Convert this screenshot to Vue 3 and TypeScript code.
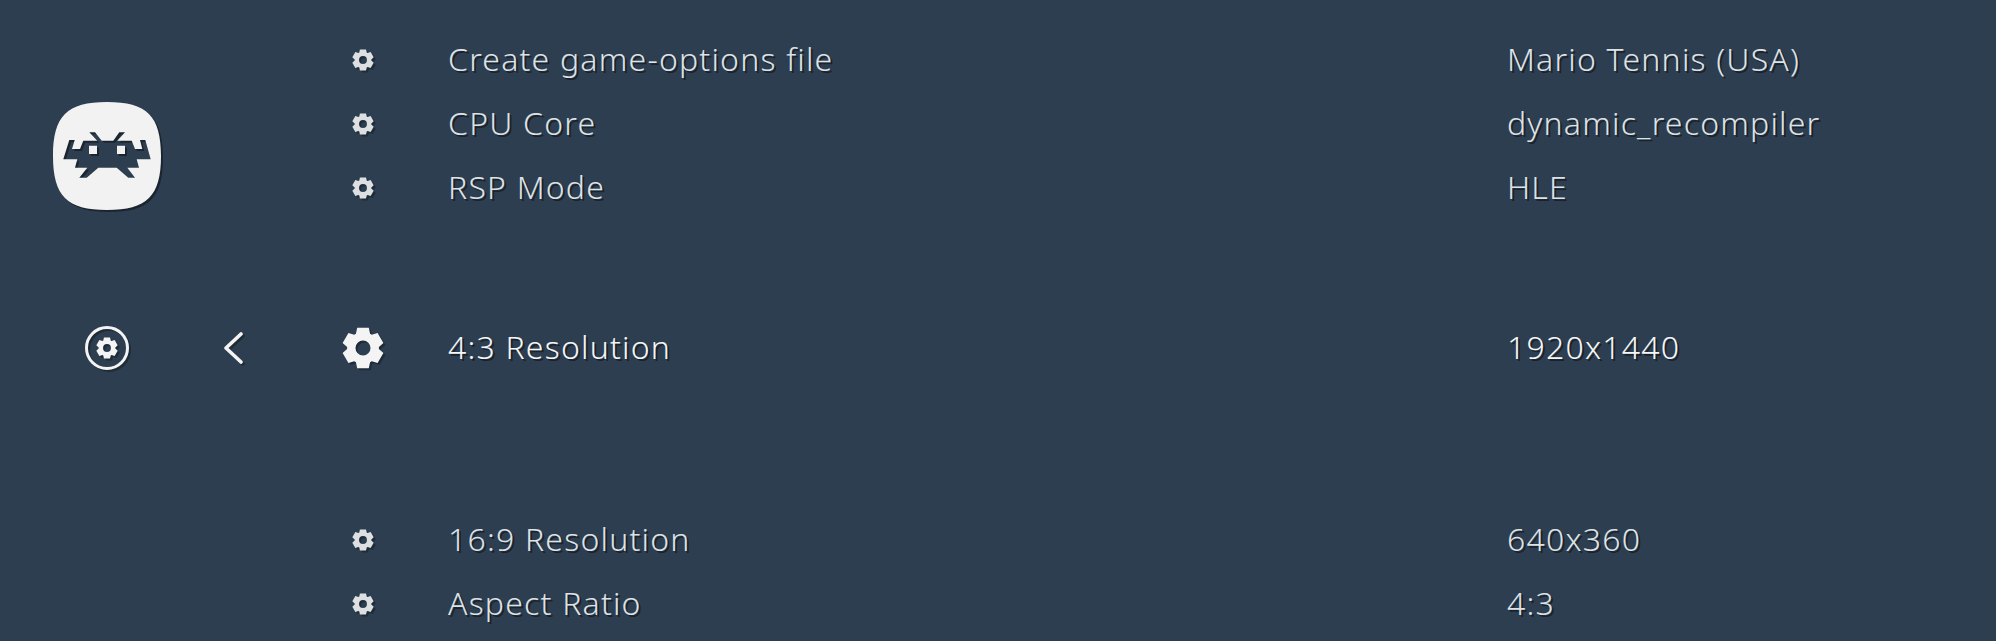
<script setup lang="ts">
type Row = { label: string; value: string; active?: boolean }

const rows: Row[] = [
  { label: 'Create game-options file', value: 'Mario Tennis (USA)' },
  { label: 'CPU Core', value: 'dynamic_recompiler' },
  { label: 'RSP Mode', value: 'HLE' },
  { label: '4:3 Resolution', value: '1920x1440', active: true },
  { label: '16:9 Resolution', value: '640x360' },
  { label: 'Aspect Ratio', value: '4:3' }
]

// six-tooth gear in a 24x24 box, teeth pointing up and down
function gearPath(hole: number): string {
  const pts: string[] = []
  for (let i = 0; i < 6; i++) {
    const a = (i * Math.PI) / 3 - Math.PI / 2
    const at = (r: number, d: number) =>
      `${(12 + r * Math.cos(a + d)).toFixed(2)} ${(12 + r * Math.sin(a + d)).toFixed(2)}`
    pts.push(at(9.1, -0.46), at(12, -0.28), at(12, 0.28), at(9.1, 0.46))
  }
  const ring = `M${pts.join('L')}Z`
  return `${ring}M${12 - hole} 12a${hole} ${hole} 0 1 0 ${hole * 2} 0a${hole} ${hole} 0 1 0 ${-hole * 2} 0Z`
}

const gear = gearPath(4.3)

// rounded tile with the invader cut out, so the tile's shadow falls inside the hole
const tile = 'M54 0C94 0 108 14 108 54S94 108 54 108 0 94 0 54 14 0 54 0Z'
const invader =
  'M36.3 30.3H42L48.7 38.7H60.3L66.3 30.3H72L64.3 38.7H78.7L82 47H89.3L87 38H92.3L97.7 57.3H83.7L86 65.7H74.3L82 75.7H75.3L63.7 65.7H45.3L33.7 75.7H26.3L34.3 65.7H22L24.3 57.3H10.3L16.3 38H21.7L19 47H27L30.3 38.7H44.3Z'
const eyes = 'M36 43.7h8v8.3h-8ZM64 43.7h8v8.3h-8Z'
</script>

<template>
  <div class="screen">
    <aside class="side">
      <div class="logo">
        <svg viewBox="0 0 108 108" width="108" height="108">
          <path class="squircle" fill-rule="evenodd" :d="`${tile}${invader}`" />
          <path class="squircle" :d="eyes" />
        </svg>
      </div>
      <div class="tab">
        <svg class="tab-icon" viewBox="0 0 44 44" width="44" height="44">
          <circle cx="22" cy="22" r="20.5" fill="none" stroke="#f4f4f4" stroke-width="3" />
          <g transform="translate(11 11) scale(0.9167)"><path :d="gear" fill="#f4f4f4" fill-rule="evenodd" /></g>
        </svg>
        <svg class="chevron" viewBox="0 0 20 32" width="20" height="32">
          <path d="M18 2 3 16l15 14" fill="none" stroke="#f4f4f4" stroke-width="3.6" stroke-linecap="round" stroke-linejoin="round" />
        </svg>
      </div>
    </aside>
    <main class="list">
      <div v-for="row in rows" :key="row.label" class="row" :class="{ active: row.active }">
        <span class="icon">
          <svg viewBox="0 0 24 24"><path :d="gear" fill-rule="evenodd" /></svg>
        </span>
        <span class="label">{{ row.label }}</span>
        <span class="value">{{ row.value }}</span>
      </div>
    </main>
  </div>
</template>

<style scoped>
.screen {
  display: flex;
  width: 1996px;
  height: 641px;
  overflow: hidden;
  background: #2d3e50;
  font-family: "Noto Sans", sans-serif;
  font-weight: 300;
}
.side {
  width: 321px;
  flex: none;
  padding: 102px 0 0 53px;
  box-sizing: border-box;
}
.logo {
  width: 108px;
  height: 108px;
  filter: drop-shadow(2px 2px 0 rgba(0, 0, 0, 0.4));
}
.logo svg {
  display: block;
}
.squircle {
  fill: #f2f2f2;
}
.tab {
  display: flex;
  align-items: center;
  margin-top: 116px;
  margin-left: 32px;
  gap: 94px;
  height: 44px;
}
.tab-icon,
.chevron {
  display: block;
  flex: none;
  filter: drop-shadow(2px 2px 0 rgba(0, 0, 0, 0.3));
}
.list {
  flex: 1;
  padding-top: 28px;
}
.row {
  display: flex;
  align-items: center;
  height: 64px;
  color: #dfe2e5;
  font-size: 32px;
  letter-spacing: 1.2px;
  text-shadow: 2px 2px 0 rgba(0, 0, 0, 0.45);
}
.row.active {
  margin: 96px 0 128px;
  color: #f6f6f6;
}
.icon {
  width: 84px;
  flex: none;
  display: flex;
  justify-content: center;
}
.icon svg {
  width: 22px;
  height: 22px;
  fill: #dde0e3;
  filter: drop-shadow(2px 2px 0 rgba(0, 0, 0, 0.3));
}
.active .icon svg {
  width: 42px;
  height: 42px;
  fill: #f4f4f4;
}
.label {
  width: 1102px;
  flex: none;
  padding: 0 0 4px 43px;
  box-sizing: border-box;
}
.value {
  padding-bottom: 4px;
}
</style>
